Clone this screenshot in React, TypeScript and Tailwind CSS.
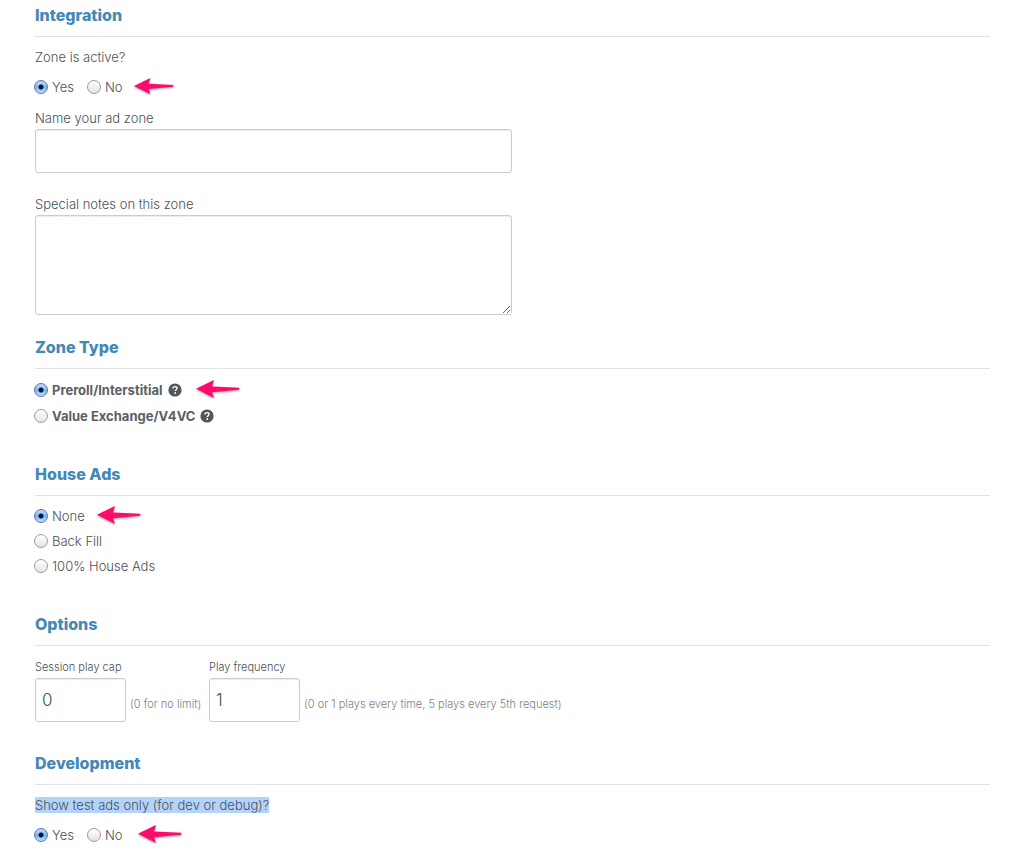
import { useId, type ReactNode } from "react";
import clsx from "clsx";

const field =
  "block rounded-[3px] border border-[#c9cdce] bg-white shadow-[inset_0_1px_1px_rgba(0,0,0,0.08)] outline-none focus:border-[#4a90c0]";

function Section({ title, className, children }: { title: string; className?: string; children: ReactNode }) {
  return (
    <section className={className}>
      <h2 className="border-b border-[#dfe3e4] pb-[9px] text-[16px] leading-6 font-extrabold text-[#4489b5]">{title}</h2>
      {children}
    </section>
  );
}

function Radio({ name, label, checked, bold }: { name: string; label: string; checked?: boolean; bold?: boolean }) {
  const id = useId();
  return (
    <div className="flex items-center gap-1">
      <input
        id={id}
        type="radio"
        name={name}
        defaultChecked={checked}
        className="-ml-px size-[14px] appearance-none rounded-full border border-[#9b9b9b] bg-linear-to-b from-white to-[#e4e4e4] checked:border-[#6470b4] checked:bg-[radial-gradient(circle_at_center,#0b1530_0_2px,transparent_3px),linear-gradient(#c3dcf8,#78b6f4_55%,#b5e6ff)]"
      />
      <label htmlFor={id} className={clsx(bold && "font-bold text-[#5b6063]")}>
        {label}
      </label>
    </div>
  );
}

function Help() {
  return (
    <button type="button" aria-label="Help" className="ml-[5px]">
      <svg viewBox="0 0 14 14" className="block size-[14px]">
        <circle cx="7" cy="7" r="6.6" fill="#50565a" />
        <path d="M5 5.5c0-1.2.9-1.9 2-1.9s2 .7 2 1.7c0 1.4-1.8 1.4-1.8 2.8" fill="none" stroke="#fff" strokeWidth="1.4" />
        <circle cx="7.2" cy="10" r=".9" fill="#fff" />
      </svg>
    </button>
  );
}

function Arrow({ className }: { className: string }) {
  return (
    <svg viewBox="0 0 44 20" className={clsx("h-5 drop-shadow-[0_1px_1px_rgba(0,0,0,0.4)]", className)} aria-hidden="true">
      <path d="M0 8.8 18 0 16 6.4 43 7.8Q44 8.8 43 9.8L16 12.2 18 18Z" fill="#ff0a6c" />
    </svg>
  );
}

export default function App() {
  return (
    <form className="pt-[3px] pr-[34px] pb-[5px] pl-[35px] font-['Inter',sans-serif] text-[13px] leading-5 font-light text-[#4b5053]">
      <Section title="Integration">
        <fieldset className="mt-[10px]">
          <legend>Zone is active?</legend>
          <div className="mt-[10px] flex items-center">
            <Radio name="active" label="Yes" checked />
            <div className="ml-[14px]">
              <Radio name="active" label="No" />
            </div>
            <Arrow className="ml-3 w-10" />
          </div>
        </fieldset>
        <label htmlFor="zone-name" className="mt-[11px] block">
          Name your ad zone
        </label>
        <input id="zone-name" type="text" className={clsx(field, "mt-px h-11 w-full max-w-[477px] px-[6px] text-[17px]")} />
        <label htmlFor="zone-notes" className="mt-[21px] block">
          Special notes on this zone
        </label>
        <textarea id="zone-notes" className={clsx(field, "mt-px h-[100px] w-full max-w-[477px] resize p-[6px]")} />
      </Section>

      <Section title="Zone Type" className="mt-5">
        <div className="mt-[11px] flex items-center">
          <Radio name="type" label="Preroll/Interstitial" checked bold />
          <Help />
          <Arrow className="ml-[14px] w-11" />
        </div>
        <div className="mt-[6px] flex items-center">
          <Radio name="type" label="Value Exchange/V4VC" bold />
          <Help />
        </div>
      </Section>

      <Section title="House Ads" className="mt-9">
        <div className="mt-[10px] flex flex-col gap-[5px]">
          <div className="flex items-center">
            <Radio name="house" label="None" checked />
            <Arrow className="ml-3 w-11" />
          </div>
          <Radio name="house" label="Back Fill" />
          <Radio name="house" label="100% House Ads" />
        </div>
      </Section>

      <Section title="Options" className="mt-9">
        <div className="mt-[11px] flex flex-wrap text-[11px]">
          <div className="w-[174px]">
            <label htmlFor="cap">Session play cap</label>
            <div className="mt-px flex items-end gap-1">
              <input id="cap" type="text" defaultValue="0" className={clsx(field, "h-11 w-[91px] px-[6px] text-[17px]")} />
              <span className="pb-2 text-[#808080]">(0 for no limit)</span>
            </div>
          </div>
          <div>
            <label htmlFor="frequency">Play frequency</label>
            <div className="mt-px flex items-end gap-1">
              <input id="frequency" type="text" defaultValue="1" className={clsx(field, "h-11 w-[91px] px-[6px] text-[17px]")} />
              <span className="pb-2 text-[#808080]">(0 or 1 plays every time, 5 plays every 5th request)</span>
            </div>
          </div>
        </div>
      </Section>

      <Section title="Development" className="mt-[29px]">
        <fieldset className="mt-[10px]">
          <legend>
            <span className="bg-[#b3d3fd]">Show test ads only (for dev or debug)?</span>
          </legend>
          <div className="mt-[10px] flex items-center">
            <Radio name="test" label="Yes" checked />
            <div className="ml-[14px]">
              <Radio name="test" label="No" />
            </div>
            <Arrow className="ml-4 w-11" />
          </div>
        </fieldset>
      </Section>
    </form>
  );
}
